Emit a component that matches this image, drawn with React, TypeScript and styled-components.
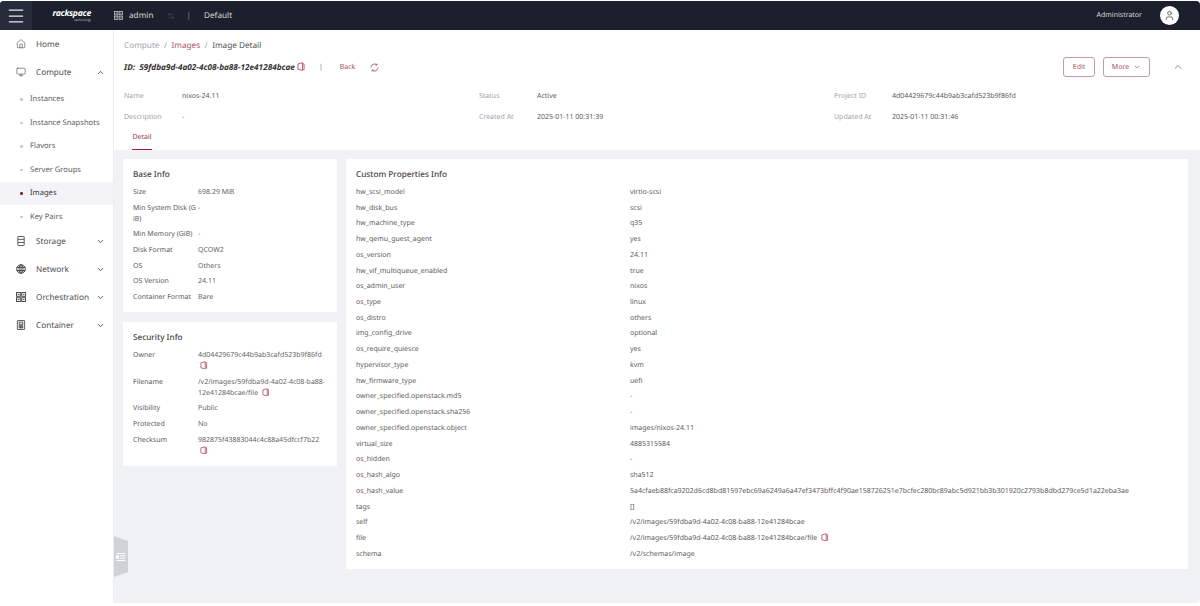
import { ReactNode } from "react";
import styled, { createGlobalStyle } from "styled-components";
import { ChevronDown, ChevronUp, Home, Monitor, ArrowLeftRight, User, Menu } from "lucide-react";

const GlobalStyle = createGlobalStyle`
  html, body { margin: 0; padding: 0; background: #fff; }
  body {
    font-family: "Noto Sans", sans-serif;
    font-size: 7px;
    color: #4a4a4a;
    overflow: hidden;
    text-rendering: geometricPrecision;
  }
`;

const Page = styled.div`
  width: 1200px;
  height: 606px;
  display: flex;
  flex-direction: column;
  padding: 1px 0 3px;
  box-sizing: border-box;
`;

const TopBar = styled.header`
  height: 29px;
  flex: none;
  display: flex;
  align-items: center;
  background: #1b202c;
  border-radius: 4px 4px 0 0;
  color: #d5d8de;
`;

const MenuButton = styled.div`
  width: 32px;
  height: 29px;
  background: #262c39;
  border-radius: 4px 0 0 0;
  display: flex;
  align-items: center;
  justify-content: center;
  color: #e6e8ec;
`;

const Logo = styled.div`
  margin-left: 21px;
  width: 38px;
  display: flex;
  flex-direction: column;
  align-items: flex-end;
  color: #fff;
  font-style: italic;
  font-weight: 700;
  font-size: 8.6px;
  line-height: 9px;
  letter-spacing: -0.25px;
  white-space: nowrap;
  small {
    font-size: 3.2px;
    line-height: 4px;
    font-weight: 400;
    font-style: normal;
    letter-spacing: 0;
    color: #c8cbd2;
  }
`;

const TopItem = styled.div<{ $left: number }>`
  margin-left: ${(p) => p.$left}px;
  font-size: 8.2px;
  display: flex;
  align-items: center;
  gap: 6px;
  svg { stroke-width: 0.8; }
`;

const Separator = styled.span`
  color: #808590;
`;

const TopRight = styled.div`
  margin-left: auto;
  display: flex;
  align-items: center;
  gap: 18px;
  padding-right: 21px;
  font-size: 7px;
`;

const Avatar = styled.div`
  width: 19px;
  height: 19px;
  border-radius: 50%;
  background: #fff;
  color: #333;
  display: flex;
  align-items: center;
  justify-content: center;
`;

const Body = styled.div`
  flex: 1;
  display: flex;
  min-height: 0;
`;

const Sidebar = styled.nav`
  width: 114px;
  flex: none;
  background: #fff;
  border-right: 1px solid #eceef1;
  box-sizing: border-box;
  padding-top: 0;
`;

const MainItem = styled.div`
  height: 28px;
  display: flex;
  align-items: center;
  padding: 0 8px 0 16px;
  font-size: 8.2px;
  color: #4d4d4d;
  svg:first-child { flex: none; width: 10px; height: 10px; margin-right: 10px; }
  span { flex: 1; white-space: nowrap; }
`;

const SubItem = styled.div<{ $active?: boolean }>`
  height: 23.5px;
  display: flex;
  align-items: center;
  padding-left: 20px;
  font-size: 7.6px;
  color: ${(p) => (p.$active ? "#333" : "#5c5c5c")};
  background: ${(p) => (p.$active ? "#f3f4f7" : "transparent")};
  &::before {
    content: "";
    width: 2.5px;
    height: 2.5px;
    border-radius: 50%;
    margin-right: 7.5px;
    background: ${(p) => (p.$active ? "#a01c2e" : "#c4c8ce")};
  }
`;

const SubList = styled.div`
  margin-top: 1.5px;
  margin-bottom: -1.5px;
`;

const Main = styled.main`
  flex: 1;
  min-width: 0;
  background: #f0f2f5;
  border-radius: 0 0 4px 0;
  display: flex;
  flex-direction: column;
  position: relative;
`;

const Handle = styled.div`
  position: absolute;
  left: 0;
  top: 506px;
  width: 14px;
  height: 41px;
  background: #cfd2d6;
  clip-path: polygon(0 0, 100% 12%, 100% 88%, 0 100%);
  display: flex;
  align-items: center;
  justify-content: center;
  color: #fff;
`;

const Header = styled.section`
  background: #fff;
  height: 120px;
  flex: none;
  padding: 8px 10px 0 10px;
  box-sizing: border-box;
  display: flex;
  flex-direction: column;
`;

const Crumbs = styled.div`
  flex: none;
  display: flex;
  gap: 4.5px;
  font-size: 8.2px;
  color: #a3a6ab;
  height: 14px;
  align-items: center;
  b { font-weight: 400; color: #a85560; }
  em { font-style: normal; color: #4f4f4f; }
`;

const TitleRow = styled.div`
  flex: none;
  display: flex;
  align-items: center;
  height: 22px;
  margin-top: 4px;
`;

const IdText = styled.div`
  font-weight: 700;
  font-style: italic;
  font-size: 8.2px;
  color: #333;
  white-space: nowrap;
`;

const CopySvg = styled.svg`
  color: #c0606c;
  flex: none;
  display: inline-block;
  vertical-align: -1.5px;
  margin-left: 2px;
`;

const CopyMark = ({ size = 7.5 }: { size?: number }) => (
  <CopySvg width={size} height={size * 1.15} viewBox="0 0 10 12" fill="none" stroke="currentColor" strokeWidth="1.3">
    <path d="M1 2.6 7 1v10L1 9.4z" />
    <path d="M7 2.4h2V10H7" />
  </CopySvg>
);

const Divider = styled.span`
  margin: 0 17px 0 14px;
  font-size: 7px;
  color: #777;
`;

const BackLink = styled.span`
  color: #a85560;
  font-size: 7px;
  margin-right: 15px;
`;

const Actions = styled.div`
  margin-left: auto;
  display: flex;
  align-items: center;
  gap: 8px;
`;

const OutlineButton = styled.div<{ $w: number }>`
  width: ${(p) => p.$w}px;
  height: 20px;
  border: 1px solid #cc9aa1;
  border-radius: 3px;
  box-sizing: border-box;
  display: flex;
  align-items: center;
  justify-content: center;
  gap: 4px;
  color: #a85560;
  font-size: 7px;
`;

const Collapse = styled.div`
  margin-left: 14px;
  margin-right: 6px;
  color: #a04858;
  display: flex;
`;

const SummaryGrid = styled.div`
  flex: none;
  display: grid;
  grid-template-columns: 355px 355px 1fr;
  margin-top: 7.5px;
`;

const SummaryCell = styled.div`
  height: 21px;
  display: flex;
  align-items: center;
  font-size: 7px;
  white-space: nowrap;
`;

const SummaryLabel = styled.span`
  width: 58px;
  color: #a0a3a8;
  flex: none;
`;

const SummaryValue = styled.span`
  color: #5a5a5a;
`;

const Tabs = styled.div`
  flex: none;
  padding-left: 8px;
  display: flex;
`;

const Tab = styled.div`
  height: 22.5px;
  padding-bottom: 1px;
  font-size: 7px;
  color: #a03a48;
  display: flex;
  align-items: center;
  border-bottom: 1px solid #a01c2e;
  box-sizing: border-box;
  width: 20px;
  justify-content: center;
`;

const Content = styled.div`
  display: flex;
  gap: 9px;
  padding: 9px 12px 0 9px;
  align-items: flex-start;
`;

const LeftColumn = styled.div`
  width: 214px;
  flex: none;
  display: flex;
  flex-direction: column;
  gap: 10px;
`;

const Card = styled.section<{ $h: number }>`
  background: #fff;
  height: ${(p) => p.$h}px;
  box-sizing: border-box;
  padding: 10px 10px 0;
  flex: 1 1 auto;
  min-width: 0;
`;

const CardTitle = styled.h3`
  margin: 0 0 3.5px;
  font-size: 8.2px;
  line-height: 12px;
  font-weight: 500;
  color: #444;
`;

const InfoRow = styled.div`
  display: flex;
  padding: 2.35px 0;
  font-size: 7px;
  line-height: 11px;
  color: #5c5c5c;
`;

const InfoLabel = styled.div`
  width: 65px;
  padding-right: 2px;
  box-sizing: border-box;
  flex: none;
  word-break: break-all;
`;

const InfoValue = styled.div`
  width: 132px;
  flex: none;
  overflow-wrap: anywhere;
  color: #666;
`;

const PropRow = styled.div`
  display: flex;
  height: 15.74px;
  align-items: center;
  font-size: 7px;
  color: #5c5c5c;
  white-space: nowrap;
`;

const PropName = styled.div`
  width: 274px;
  flex: none;
`;

const IconSvg = styled.svg`
  flex: none;
  stroke: currentColor;
  fill: none;
  stroke-width: 1;
`;

const StorageIcon = () => (
  <IconSvg width="9" height="10" viewBox="0 0 10 11">
    <rect x="1.5" y="0.5" width="7" height="10" rx="0.5" />
    <path d="M1.5 3.7h7M1.5 7.2h7" />
  </IconSvg>
);

const NetworkIcon = () => (
  <IconSvg width="10" height="10" viewBox="0 0 10 10" strokeWidth="0.8">
    <circle cx="5" cy="5" r="4.3" />
    <ellipse cx="5" cy="5" rx="2" ry="4.3" />
    <path d="M0.7 3.5h8.6M0.7 6.5h8.6M5 0.7v8.6" />
  </IconSvg>
);

const OrchestrationIcon = () => (
  <IconSvg width="9" height="9" viewBox="0 0 10 10">
    <rect x="0.5" y="0.5" width="3.8" height="3.8" />
    <rect x="5.7" y="0.5" width="3.8" height="3.8" />
    <rect x="0.5" y="5.7" width="3.8" height="3.8" />
    <rect x="5.7" y="5.7" width="3.8" height="3.8" />
    <path d="M1.6 2.4h1.6M6.8 2.4h1.6M1.6 7.6h1.6M6.8 7.6h1.6" />
  </IconSvg>
);

const ContainerIcon = () => (
  <IconSvg width="9" height="10" viewBox="0 0 10 11">
    <rect x="1" y="0.5" width="8" height="10" rx="0.5" />
    <rect x="3" y="2.3" width="4" height="2.4" />
    <rect x="3" y="6.3" width="1.6" height="2.4" />
    <rect x="5.4" y="6.3" width="1.6" height="2.4" />
  </IconSvg>
);

const ReloadSvg = styled(IconSvg)`
  color: #a85560;
`;

const ReloadIcon = () => (
  <ReloadSvg width="9" height="9" viewBox="0 0 10 10">
    <path d="M1 5a4 4 0 0 1 6.6-3M9 5a4 4 0 0 1-6.6 3" />
    <path d="M7.9 0.6 7.7 2.3 6 2.2M2.1 9.4l.2-1.7 1.7.1" />
  </ReloadSvg>
);

const HandleIcon = () => (
  <IconSvg width="10" height="8" viewBox="0 0 10 8">
    <path d="M0.5 0.5h9M4 2.8h5.5M4 5.2h5.5M0.5 7.5h9" />
    <rect x="0.5" y="2.8" width="2" height="2.4" />
  </IconSvg>
);

const baseInfo: [string, string][] = [
  ["Size", "698.29 MiB"],
  ["Min System Disk (GiB)", "-"],
  ["Min Memory (GiB)", "-"],
  ["Disk Format", "QCOW2"],
  ["OS", "Others"],
  ["OS Version", "24.11"],
  ["Container Format", "Bare"],
];

const securityInfo: [string, ReactNode][] = [
  ["Owner", <>4d04429679c44b9ab3cafd523b9f86fd <CopyMark /></>],
  ["Filename", <>/v2/images/59fdba9d-4a02-4c08-ba88-12e41284bcae/file <CopyMark /></>],
  ["Visibility", "Public"],
  ["Protected", "No"],
  ["Checksum", <>982875f43883044c4c88a45dfccf7b22 <CopyMark /></>],
];

const customProps: [string, ReactNode][] = [
  ["hw_scsi_model", "virtio-scsi"],
  ["hw_disk_bus", "scsi"],
  ["hw_machine_type", "q35"],
  ["hw_qemu_guest_agent", "yes"],
  ["os_version", "24.11"],
  ["hw_vif_multiqueue_enabled", "true"],
  ["os_admin_user", "nixos"],
  ["os_type", "linux"],
  ["os_distro", "others"],
  ["img_config_drive", "optional"],
  ["os_require_quiesce", "yes"],
  ["hypervisor_type", "kvm"],
  ["hw_firmware_type", "uefi"],
  ["owner_specified.openstack.md5", "-"],
  ["owner_specified.openstack.sha256", "-"],
  ["owner_specified.openstack.object", "images/nixos-24.11"],
  ["virtual_size", "4885315584"],
  ["os_hidden", "-"],
  ["os_hash_algo", "sha512"],
  ["os_hash_value", "5a4cfaeb88fca9202d6cd8bd81597ebc69a6249a6a47ef3473bffc4f90ae158726251e7bcfec280bc89abc5d921bb3b301920c2793b8dbd279ce5d1a22eba3ae"],
  ["tags", "[]"],
  ["self", "/v2/images/59fdba9d-4a02-4c08-ba88-12e41284bcae"],
  ["file", <>/v2/images/59fdba9d-4a02-4c08-ba88-12e41284bcae/file <CopyMark /></>],
  ["schema", "/v2/schemas/image"],
];

const computeItems = ["Instances", "Instance Snapshots", "Flavors", "Server Groups", "Images", "Key Pairs"];

const App = () => {
  return (
    <Page>
      <GlobalStyle />
      <TopBar>
        <MenuButton>
          <Menu size={20} strokeWidth={1.5} />
        </MenuButton>
        <Logo>
          rackspace
          <small>technology</small>
        </Logo>
        <TopItem $left={23}>
          <OrchestrationIcon />
          admin
        </TopItem>
        <TopItem $left={14}>
          <ArrowLeftRight size={8} strokeWidth={1} color="#808590" />
        </TopItem>
        <TopItem $left={11}>
          <Separator>|</Separator>
        </TopItem>
        <TopItem $left={13}>Default</TopItem>
        <TopRight>
          Administrator
          <Avatar>
            <User size={11} strokeWidth={1.5} />
          </Avatar>
        </TopRight>
      </TopBar>
      <Body>
        <Sidebar>
          <MainItem>
            <Home size={10} strokeWidth={1.5} />
            <span>Home</span>
          </MainItem>
          <MainItem>
            <Monitor size={10} strokeWidth={1.5} />
            <span>Compute</span>
            <ChevronUp size={9} strokeWidth={2.5} />
          </MainItem>
          <SubList>
            {computeItems.map((item) => (
              <SubItem key={item} $active={item === "Images"}>
                {item}
              </SubItem>
            ))}
          </SubList>
          <MainItem>
            <StorageIcon />
            <span>Storage</span>
            <ChevronDown size={9} strokeWidth={2.5} />
          </MainItem>
          <MainItem>
            <NetworkIcon />
            <span>Network</span>
            <ChevronDown size={9} strokeWidth={2.5} />
          </MainItem>
          <MainItem>
            <OrchestrationIcon />
            <span>Orchestration</span>
            <ChevronDown size={9} strokeWidth={2.5} />
          </MainItem>
          <MainItem>
            <ContainerIcon />
            <span>Container</span>
            <ChevronDown size={9} strokeWidth={2.5} />
          </MainItem>
        </Sidebar>
        <Main>
          <Handle>
            <HandleIcon />
          </Handle>
          <Header>
            <Crumbs>
              <span>Compute</span>
              <span>/</span>
              <b>Images</b>
              <span>/</span>
              <em>Image Detail</em>
            </Crumbs>
            <TitleRow>
              <IdText>ID:&nbsp; 59fdba9d-4a02-4c08-ba88-12e41284bcae</IdText>
              <CopyMark size={8} />
              <Divider>|</Divider>
              <BackLink>Back</BackLink>
              <ReloadIcon />
              <Actions>
                <OutlineButton $w={32}>Edit</OutlineButton>
                <OutlineButton $w={47}>
                  More <ChevronDown size={8} />
                </OutlineButton>
                <Collapse>
                  <ChevronUp size={12} strokeWidth={1.5} />
                </Collapse>
              </Actions>
            </TitleRow>
            <SummaryGrid>
              <SummaryCell><SummaryLabel>Name</SummaryLabel><SummaryValue>nixos-24.11</SummaryValue></SummaryCell>
              <SummaryCell><SummaryLabel>Status</SummaryLabel><SummaryValue>Active</SummaryValue></SummaryCell>
              <SummaryCell><SummaryLabel>Project ID</SummaryLabel><SummaryValue>4d04429679c44b9ab3cafd523b9f86fd</SummaryValue></SummaryCell>
              <SummaryCell><SummaryLabel>Description</SummaryLabel><SummaryValue>-</SummaryValue></SummaryCell>
              <SummaryCell><SummaryLabel>Created At</SummaryLabel><SummaryValue>2025-01-11 00:31:39</SummaryValue></SummaryCell>
              <SummaryCell><SummaryLabel>Updated At</SummaryLabel><SummaryValue>2025-01-11 00:31:46</SummaryValue></SummaryCell>
            </SummaryGrid>
            <Tabs>
              <Tab>Detail</Tab>
            </Tabs>
          </Header>
          <Content>
            <LeftColumn>
              <Card $h={153}>
                <CardTitle>Base Info</CardTitle>
                {baseInfo.map(([label, value]) => (
                  <InfoRow key={label}>
                    <InfoLabel>{label}</InfoLabel>
                    <InfoValue>{value}</InfoValue>
                  </InfoRow>
                ))}
              </Card>
              <Card $h={144}>
                <CardTitle>Security Info</CardTitle>
                {securityInfo.map(([label, value]) => (
                  <InfoRow key={label}>
                    <InfoLabel>{label}</InfoLabel>
                    <InfoValue>{value}</InfoValue>
                  </InfoRow>
                ))}
              </Card>
            </LeftColumn>
            <Card $h={410}>
              <CardTitle>Custom Properties Info</CardTitle>
              {customProps.map(([label, value]) => (
                <PropRow key={label}>
                  <PropName>{label}</PropName>
                  <div>{value}</div>
                </PropRow>
              ))}
            </Card>
          </Content>
        </Main>
      </Body>
    </Page>
  );
};

export default App;
